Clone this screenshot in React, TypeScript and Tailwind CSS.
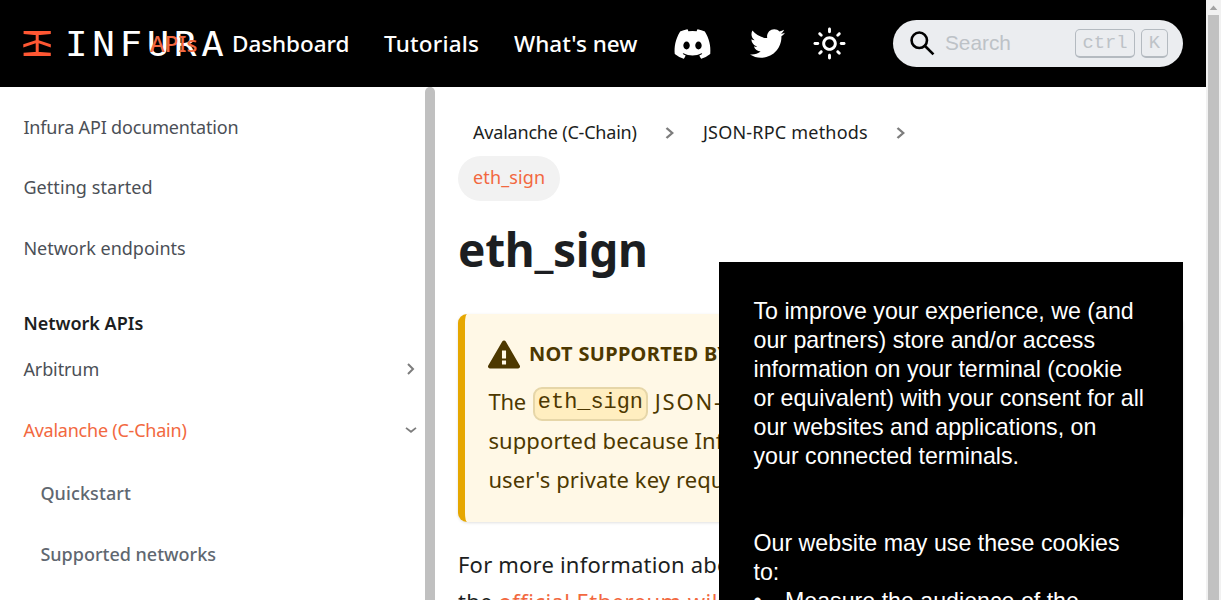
import type { ReactNode } from "react";
import { FaDiscord, FaTwitter } from "react-icons/fa";

function Logo() {
  return (
    <div className="flex h-[30px] w-[204px] shrink-0 items-center">
      <svg viewBox="0 0 28 25" className="h-[25px] w-[28px] shrink-0" fill="#ff5733">
        <path d="M.6 0h27.2v3.1L17.2 4H11.200L.6 3.100z" />
        <path d="M.6 24.900h27.200v-3.100L17.200 20.900H11.200L.6 21.800z" />
        <path d="M12.700 3h3v6.300l12.100 4v3.200L15.700 12.300V21.500h-3v-9.200L.3 16.500v-3.200L12.700 9.300z" />
      </svg>
      <span className="ml-[14px] origin-left scale-x-[1.1] font-['DejaVu_Sans_Mono',monospace] text-[34px] leading-[30px] tracking-[4.3px] text-white">
        INFURA
      </span>
    </div>
  );
}

function NavLink({ className, children }: { className: string; children: ReactNode }) {
  return <a className={`relative z-10 whitespace-nowrap text-[22.5px] font-medium leading-[30px] ${className}`}>{children}</a>;
}

function Sun() {
  return (
    <svg viewBox="0 0 24 24" className="h-[35px] w-[35px]" fill="#fff">
      <path d="M12,9c1.65,0,3,1.35,3,3s-1.35,3-3,3s-3-1.35-3-3S10.35,9,12,9 M12,7c-2.76,0-5,2.24-5,5s2.24,5,5,5s5-2.24,5-5 S14.76,7,12,7L12,7z M2,13l2,0c0.55,0,1-0.45,1-1s-0.45-1-1-1l-2,0c-0.55,0-1,0.45-1,1S1.450,13,2,13z M20,13l2,0c0.55,0,1-0.45,1-1 s-0.45-1-1-1l-2,0c-0.55,0-1,0.45-1,1S19.450,13,20,13z M11,2v2c0,0.55,0.45,1,1,1s1-0.45,1-1V2c0-0.55-0.45-1-1-1S11,1.450,11,2z M11,20v2c0,0.55,0.45,1,1,1s1-0.45,1-1v-2c0-0.55-0.45-1-1-1C11.450,19,11,19.450,11,20z M5.990,4.580c-0.390-0.390-1.030-0.390-1.410,0 c-0.390,0.390-0.390,1.030,0,1.410l1.060,1.060c0.390,0.390,1.030,0.390,1.410,0s0.390-1.030,0-1.410L5.990,4.580z M18.360,16.950 c-0.390-0.390-1.030-0.390-1.410,0c-0.390,0.390-0.390,1.030,0,1.410l1.060,1.060c0.390,0.390,1.030,0.390,1.410,0c0.390-0.390,0.390-1.030,0-1.410 L18.360,16.950z M19.420,5.990c0.390-0.390,0.390-1.030,0-1.410c-0.390-0.390-1.030-0.390-1.410,0l-1.060,1.060c-0.390,0.390-0.390,1.030,0,1.410 s1.030,0.390,1.410,0L19.420,5.990z M7.050,18.360c0.390-0.390,0.390-1.030,0-1.410c-0.390-0.390-1.030-0.390-1.410,0l-1.060,1.060 c-0.390,0.390-0.390,1.030,0,1.410s1.030,0.390,1.410,0L7.050,18.360z" />
    </svg>
  );
}

function Key({ className, children }: { className: string; children: ReactNode }) {
  return (
    <kbd
      className={`flex h-[29px] items-center justify-center rounded-[5px] border border-b-2 border-[#b4bac0] font-['Liberation_Mono',monospace] text-[18.8px] leading-none text-[#bdc2c7] ${className}`}
    >
      {children}
    </kbd>
  );
}

function Header() {
  return (
    <header className="flex h-[87px] shrink-0 items-center bg-black pl-[23px] pr-[23px]">
      <Logo />
      <NavLink className="-ml-[77px] w-[83px] text-[#f26840]">APIs</NavLink>
      <NavLink className="-ml-[1px] w-[152px] tracking-[-0.06px] text-white">Dashboard</NavLink>
      <NavLink className="w-[130px] tracking-[0.18px] text-white">Tutorials</NavLink>
      <NavLink className="w-[159px] text-white">What's new</NavLink>
      <FaDiscord preserveAspectRatio="none" className="h-[34px] w-[39px] shrink-0 text-white" />
      <FaTwitter className="ml-[38px] h-[35px] w-[35px] shrink-0 text-white" />
      <div className="ml-[27px] shrink-0">
        <Sun />
      </div>
      <div className="ml-auto flex h-[47px] w-[290px] shrink-0 items-center rounded-full bg-[#ebedf0] pl-[17px] pr-[15px]">
        <svg viewBox="0 0 24 24" className="h-[25px] w-[25px]" fill="none" stroke="#000" strokeWidth="2.5">
          <circle cx="8.900" cy="8.900" r="7.400" />
          <path d="M14.200 14.200l8.300 8.300" />
        </svg>
        <span className="ml-[10px] pb-[2px] font-['Liberation_Sans',sans-serif] text-[20.8px] text-[#bdc2c7]">Search</span>
        <Key className="ml-auto w-[60px]">ctrl</Key>
        <Key className="ml-[6px] w-[27px]">K</Key>
      </div>
    </header>
  );
}

function Item({ className, icon, children }: { className: string; icon?: ReactNode; children: ReactNode }) {
  return (
    <li className={`flex items-center justify-between whitespace-nowrap pr-[8px] text-[18px] ${className}`}>
      <span>{children}</span>
      {icon}
    </li>
  );
}

function Chevron({ className }: { className: string }) {
  return (
    <svg viewBox="0 0 12 12" className={className} preserveAspectRatio="none" fill="none" stroke="#7d7d7d" strokeWidth="2">
      <path d="M3 1l5 5-5 5" />
    </svg>
  );
}

function Sidebar() {
  return (
    <aside className="flex w-[435px] shrink-0">
      <ul className="w-[425px] pl-[23.4px] pt-[10px] text-[#4b4f56]">
        <Item className="h-[60px] tracking-[-0.17px]">Infura API documentation</Item>
        <Item className="h-[60px] tracking-[0.07px]">Getting started</Item>
        <Item className="h-[62px]">Network endpoints</Item>
        <Item className="mt-[21px] h-[46px] font-semibold text-[#1c1e21]">Network APIs</Item>
        <Item className="h-[46px] tracking-[-0.1px]" icon={<Chevron className="h-[12px] w-[12px]" />}>
          Arbitrum
        </Item>
        <Item
          className="mt-[7px] h-[62px] tracking-[-0.23px] text-[#f26840]"
          icon={
            <svg viewBox="0 0 12 6" className="h-[6px] w-[12px]" fill="none" stroke="#7d7d7d" strokeWidth="1.800">
              <path d="M1 .9l5 3.900L11 .9" />
            </svg>
          }
        >
          Avalanche (C-Chain)
        </Item>
        <Item className="mt-[2px] h-[60px] pl-[17px] font-medium tracking-[0.1px] text-[#606770]">Quickstart</Item>
        <Item className="h-[62px] pl-[17px] font-medium text-[#606770]">Supported networks</Item>
      </ul>
      <div className="w-[10px] rounded-t-[5px] bg-[#c0c0c0]" />
    </aside>
  );
}

function Breadcrumbs() {
  return (
    <nav className="text-[18px] leading-[45px] text-[#1c1e21]">
      <div className="-mt-[1px] mb-[1px] flex items-center pl-[15px]">
        <span className="w-[190px] tracking-[-0.2px]">Avalanche (C-Chain)</span>
        <Chevron className="h-[12px] w-[14px]" />
        <span className="ml-[26px] w-[189px] tracking-[0.2px]">JSON-RPC methods</span>
        <Chevron className="ml-[2px] h-[12px] w-[14px]" />
      </div>
      <div className="flex h-[45px] w-[102px] items-center rounded-full bg-[#f2f2f2] pb-[2px] pl-[15px] tracking-[0.13px] text-[#f26840]">
        eth_sign
      </div>
    </nav>
  );
}

function Admonition() {
  return (
    <div className="mt-[35px] h-[208px] rounded-[9px] border-l-[7px] border-[#e6a700] bg-[#fff8e6] pl-[23px] pt-[23px] text-[#4d3800] shadow-[0_1px_3px_rgba(0,0,0,0.12)]">
      <div className="flex h-[34px] items-center">
        <svg viewBox="0 0 16 16" className="h-[33px] w-[32px]" fill="currentColor">
          <path
            fillRule="evenodd"
            d="M8.893 1.500c-.183-.310-.520-.500-.887-.500s-.703.190-.886.500L.138 13.499a.980.980 0 0 0 0 1.001c.193.310.530.501.886.501h13.964c.367 0 .704-.190.877-.500a1.030 1.030 0 0 0 .010-1.002L8.893 1.500zm.133 11.497H6.987v-2.003h2.039v2.003zm0-3.004H6.987V5.987h2.039v4.006z"
          />
        </svg>
        <span className="ml-[9px] text-[20px] font-bold tracking-[0.3px]">NOT SUPPORTED BY INFURA</span>
      </div>
      <p className="mt-[11px] pl-[0.4px] text-[22px] leading-[38.5px] tracking-[0.1px]">
        <span className="tracking-[-0.2px]">The</span>{" "}
        <code className="ml-[1px] mr-[1px] inline-block h-[34px] rounded-[9px] border-2 border-[#e6d6a8] bg-[#ffeec0] px-[3px] align-middle font-['Liberation_Mono',monospace] text-[21.9px] leading-[28px] tracking-normal">
          eth_sign
        </code>{" "}
        <span className="tracking-[1.8px]">JSON-RPC</span> method
        <br />
        supported because Infura doesn't
        <br />
        user's private key required to sign.
      </p>
    </div>
  );
}

function Article() {
  return (
    <main className="w-[771px] shrink-0 overflow-hidden whitespace-nowrap pl-[23px] pr-[23px] pt-[24px]">
      <Breadcrumbs />
      <h1 className="mt-[18px] text-[46px] font-bold leading-[60px] tracking-[-0.31px] text-[#1c1e21]">eth_sign</h1>
      <Admonition />
      <p className="mt-[24px] text-[22px] leading-[37px] tracking-[0.2px] text-[#1c1e21]">
        For more information about this method
        <br />
        the <a className="tracking-[0.45px] text-[#f26840]">official Ethereum wiki</a>
      </p>
    </main>
  );
}

function CookieNotice() {
  return (
    <div className="absolute left-[719px] top-[262px] z-20 h-[338px] w-[464px] overflow-hidden bg-black pl-[34.500px] pt-[35px] font-['Liberation_Sans',sans-serif] text-[23.200px] leading-[29px] text-white">
      <p className="w-[392px]">
        To improve your experience, we (and our partners) store and/or access information on your terminal (cookie or
        equivalent) with your consent for all our websites and applications, on your connected terminals.
      </p>
      <p className="mt-[58px] w-[392px]">Our website may use these cookies to:</p>
      <ul className="w-[395px] list-none">
        <li className="flex">
          <span className="w-[31.500px] shrink-0">•</span>Measure the audience of the
        </li>
      </ul>
    </div>
  );
}

function PageScrollbar() {
  return (
    <div className="flex w-[15px] shrink-0 flex-col items-center bg-[#f1f1f1]">
      <svg viewBox="0 0 15 15" className="h-[15px] w-[15px] shrink-0" fill="#a3a3a3">
        <path d="M7.500 5.500L11.300 10H3.700z" />
      </svg>
      <div className="w-[11px] grow bg-[#c1c1c1]" />
    </div>
  );
}

export default function App() {
  return (
    <div className="relative flex h-[600px] w-[1221px] overflow-hidden bg-white font-['Noto_Sans',sans-serif]">
      <div className="flex w-[1206px] shrink-0 flex-col">
        <Header />
        <div className="flex min-h-0 grow overflow-hidden">
          <Sidebar />
          <Article />
        </div>
      </div>
      <PageScrollbar />
      <CookieNotice />
    </div>
  );
}
